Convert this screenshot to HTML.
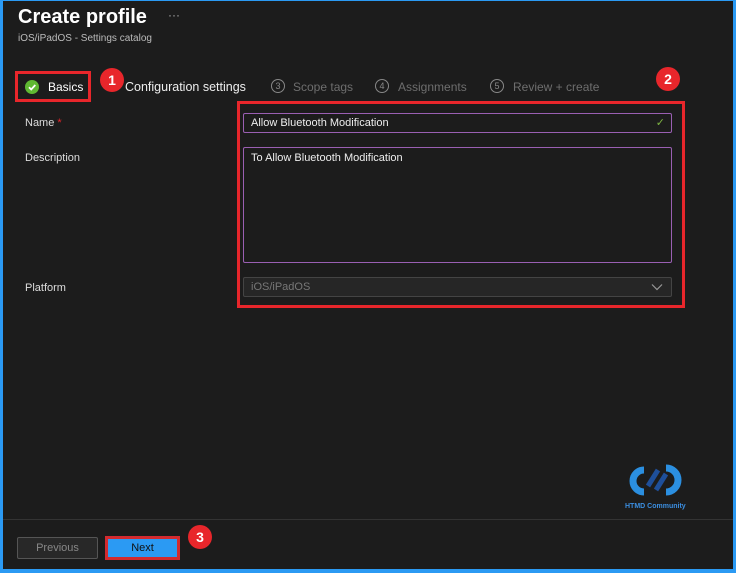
<!DOCTYPE html>
<html><head><style>
*{margin:0;padding:0;box-sizing:border-box}
body{width:736px;height:573px;background:#2b9af3;font-family:"Liberation Sans",sans-serif;overflow:hidden;position:relative}
#p{position:absolute;left:3px;top:1px;width:730px;height:568px;background:#1c1c1c}
.a{position:absolute;white-space:nowrap}
.c{position:absolute;border-radius:50%;background:#e8262b;color:#fff;font-weight:bold;font-size:14px;text-align:center;line-height:24px;width:24px;height:24px}
.n{position:absolute;border:1px solid #888;border-radius:50%;width:14px;height:14px;font-size:9px;color:#888;text-align:center;line-height:12px}
.g{color:#6e6e6e;font-size:12px}
.in{position:absolute;left:243px;width:429px;border:1px solid #9a5fb3;border-radius:2px;background:#1c1c1c;color:#eee;font-size:11px;padding-left:7px}
</style></head><body>
<div id="p"></div>
<div class="a" style="left:18px;top:6px;font-size:20px;font-weight:bold;color:#fff">Create profile</div>
<div class="a" style="left:168px;top:8px;font-size:12px;color:#aaa">···</div>
<div class="a" style="left:18px;top:33px;font-size:10px;color:#bbb">iOS/iPadOS - Settings catalog</div>

<div class="a" style="left:15px;top:71px;width:76px;height:31px;border:3px solid #e8262b"></div>
<div class="a" style="left:25px;top:80px;width:14px;height:14px;border-radius:50%;background:#5fb832"></div>
<svg class="a" style="left:25px;top:80px" width="14" height="14"><path d="M4 7.3l2.2 2.2L10.3 5" stroke="#fff" stroke-width="1.8" fill="none"/></svg>
<div class="a" style="left:48px;top:80px;font-size:12px;color:#fff">Basics</div>
<div class="c" style="left:100px;top:68px">1</div>
<div class="a" style="left:125px;top:80px;font-size:12.5px;color:#eee">Configuration settings</div>
<div class="n" style="left:271px;top:79px">3</div><div class="a g" style="left:293px;top:80px">Scope tags</div>
<div class="n" style="left:375px;top:79px">4</div><div class="a g" style="left:398px;top:80px">Assignments</div>
<div class="n" style="left:490px;top:79px">5</div><div class="a g" style="left:513px;top:80px">Review + create</div>
<div class="c" style="left:656px;top:67px">2</div>

<div class="a" style="left:237px;top:101px;width:448px;height:207px;border:3px solid #e8262b"></div>
<div class="a" style="left:25px;top:117px;font-size:11px;color:#ddd">Name <span style="color:#e8262b">*</span></div>
<div class="a" style="left:25px;top:152px;font-size:11px;color:#ddd">Description</div>
<div class="a" style="left:25px;top:282px;font-size:11px;color:#ddd">Platform</div>
<div class="in" style="top:113px;height:20px;line-height:18px">Allow Bluetooth Modification<span style="position:absolute;right:6px;color:#7cb342">✓</span></div>
<div class="in" style="top:147px;height:116px;padding-top:4px">To Allow Bluetooth Modification</div>
<div class="in" style="top:277px;height:20px;line-height:18px;border-color:#444;background:#262626;color:#777">iOS/iPadOS
<svg style="position:absolute;right:8px;top:5px" width="12" height="8"><path d="M1 1.5l5 5 5-5" stroke="#999" stroke-width="1.2" fill="none"/></svg></div>

<svg class="a" style="left:622px;top:460px" width="68" height="40"><path d="M22 10a11 11 0 1 0 0 22" stroke="#2b8fe0" stroke-width="7" fill="none"/><path d="M44 8a12 12 0 1 1 0 24" stroke="#2b8fe0" stroke-width="7" fill="none"/><path d="M26 26l10-16M34 30l10-16" stroke="#1e4f9a" stroke-width="5"/></svg>
<div class="a" style="left:625px;top:503px;font-size:7px;color:#3b8ee0;font-weight:bold">HTMD Community</div>

<div class="a" style="left:3px;top:519px;width:730px;height:1px;background:#333"></div>
<div class="a" style="left:17px;top:537px;width:81px;height:22px;border:1px solid #555;border-radius:2px;background:#282828;color:#888;font-size:11px;text-align:center;line-height:20px">Previous</div>
<div class="a" style="left:105px;top:536px;width:75px;height:24px;border:3px solid #d32a2f;background:#2b9af3;color:#111;font-size:11px;text-align:center;line-height:18px">Next</div>
<div class="c" style="left:188px;top:525px">3</div>
</body></html>
